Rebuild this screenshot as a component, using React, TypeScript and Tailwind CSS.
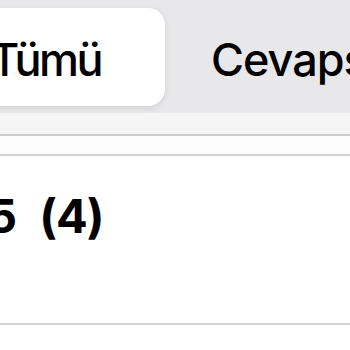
import React from 'react';

const SegmentBar: React.FC = () => (
    <div className="flex h-[113px] bg-[#e8e8ea] pt-[8px] pb-[7px]">
        <div className="ml-[-70px] flex w-[235px] shrink-0 items-center justify-center rounded-[17px] bg-white pt-[4px] pr-[4px] shadow-[0_2px_6px_rgba(0,0,0,0.10)]">
            <span className="text-[45px] font-medium leading-none tracking-[-2.5px] text-black">Tümü</span>
        </div>
        <div className="flex flex-1 items-center whitespace-nowrap pl-[46px] pt-[4px]">
            <span className="text-[45px] font-medium leading-none tracking-[-1px] text-black">Cevapsız</span>
        </div>
    </div>
);

const App: React.FC = () => {
    return (
        <div className="h-[350px] w-[350px] overflow-hidden bg-white font-['Inter','Liberation_Sans',Arial,sans-serif]">
            <SegmentBar />
            <div className="h-[21px] bg-[#f5f5f5]" />
            <div className="h-[2px] bg-[#cdcdcd]" />
            <div className="h-[18px] bg-[#fdfdfd]" />
            <div className="h-[2px] bg-[#d2d2d2]" />
            <div className="h-[167px] pt-[36px]">
                <div className="ml-[-13px] whitespace-nowrap text-[47px] font-bold leading-none tracking-[-1px] text-black [word-spacing:13px]">
                    5 (4)
                </div>
            </div>
            <div className="h-[2px] bg-[#d4d4d4]" />
        </div>
    );
};

export default App;
